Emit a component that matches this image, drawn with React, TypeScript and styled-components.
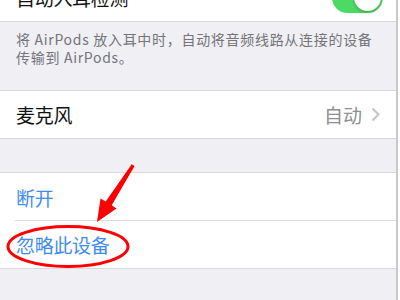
import React from "react";
import styled, { createGlobalStyle } from "styled-components";

const Global = createGlobalStyle`
  html, body { margin: 0; padding: 0; background: #ffffff; }
  body { font-family: "Noto Sans CJK SC", "Noto Sans", sans-serif; overflow: hidden; }
`;

const Page = styled.div`
  position: relative;
  width: 396px;
  height: 300px;
  background: #efeff4;
  border-right: 2px solid #c9c9cc;
  overflow: hidden;
  display: flex;
  flex-direction: column;
`;

const Group = styled.div<{ $cut?: number }>`
  background: #ffffff;
  border-top: 1px solid #d9d9dd;
  border-bottom: 1px solid #d9d9dd;
  margin-top: ${(p) => (p.$cut ? `-${p.$cut}px` : "0")};
  display: flex;
  flex-direction: column;
`;

const Cell = styled.div<{ $divider?: boolean }>`
  height: 47px;
  display: flex;
  align-items: center;
  justify-content: space-between;
  padding: 0 13px 0 16px;
  box-sizing: border-box;
  position: relative;
  ${(p) =>
    p.$divider
      ? `&::after { content: ""; position: absolute; left: 15px; right: 0; bottom: 0; height: 1px; background: #dcdce0; } height: 48px;`
      : ""}
`;

const Label = styled.span<{ $blue?: boolean }>`
  font-size: 19px;
  color: ${(p) => (p.$blue ? "#3f8cf0" : "#111111")};
  letter-spacing: -0.3px;
`;

const Detail = styled.span`
  display: flex;
  align-items: center;
  gap: 9px;
  font-size: 19px;
  color: #8e8e93;
  padding-right: 3px;
`;

const Switch = styled.div`
  width: 51px;
  height: 31px;
  border-radius: 16px;
  background: #4cd964;
  position: relative;
  &::after {
    content: "";
    position: absolute;
    right: 2px;
    top: 2px;
    width: 27px;
    height: 27px;
    border-radius: 50%;
    background: #fff;
    box-shadow: 0 2px 3px rgba(0, 0, 0, 0.2);
  }
`;

const Footer = styled.div`
  height: 68px;
  box-sizing: border-box;
  padding: 8px 16px 0 16px;
  display: flex;
  flex-direction: column;
`;

const FooterLine = styled.div`
  height: 18px;
  font-size: 14px;
  line-height: 18px;
  letter-spacing: 0.7px;
  color: #747479;
  white-space: nowrap;
`;

const Spacer = styled.div`
  height: 33px;
`;

const Annot = styled.svg`
  position: absolute;
  left: 0;
  top: 0;
  pointer-events: none;
`;

const Chevron = () => (
  <svg width="9" height="15" viewBox="0 0 9 15">
    <path d="M1.5 1.5 L7.5 7.5 L1.5 13.5" fill="none" stroke="#c4c4c8" strokeWidth="2" />
  </svg>
);

export default function App() {
  return (
    <>
      <Global />
      <Page>
        <Group $cut={27}>
          <Cell>
            <Label>自动入耳检测</Label>
            <Switch />
          </Cell>
        </Group>
        <Footer>
          <FooterLine>将 AirPods 放入耳中时，自动将音频线路从连接的设备</FooterLine>
          <FooterLine>传输到 AirPods。</FooterLine>
        </Footer>
        <Group>
          <Cell>
            <Label>麦克风</Label>
            <Detail>
              自动
              <Chevron />
            </Detail>
          </Cell>
        </Group>
        <Spacer />
        <Group>
          <Cell $divider>
            <Label $blue>断开</Label>
          </Cell>
          <Cell>
            <Label $blue>忽略此设备</Label>
          </Cell>
        </Group>
        <Annot width="400" height="300" viewBox="0 0 400 300">
          <polygon
            points="131.7,164.2 105.7,201.5 100.5,198.5 97,222 116.5,208.5 111.7,205.3 134.6,166"
            fill="#ff0000"
          />
          <ellipse cx="68" cy="246.5" rx="60" ry="20" fill="none" stroke="#ff0000" strokeWidth="3" />
        </Annot>
      </Page>
    </>
  );
}
